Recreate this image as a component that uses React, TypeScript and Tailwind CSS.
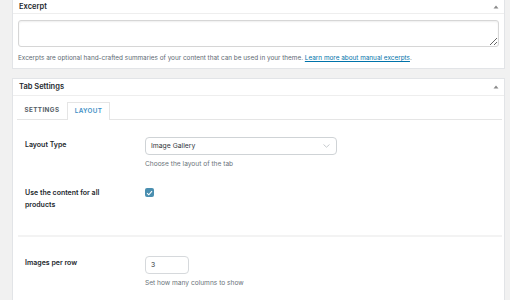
import React from 'react';

const font = { fontFamily: '"Inter", "Liberation Sans", sans-serif' };

const Caret = () => (
  <svg width="6" height="4" viewBox="0 0 6 4" className="text-[#8a8a8a]">
    <path d="M3 0.5 L5.5 3.5 L0.5 3.5 Z" fill="currentColor" />
  </svg>
);

export default function App() {
  return (
    <div
      className="w-[510px] h-[300px] overflow-hidden bg-[#f1f1f1] pl-[12px] pr-[5px] text-[#23282d]"
      style={font}
    >
      {/* Excerpt */}
      <div className="-mt-[2px] border border-[#e2e4e7] bg-white">
        <div className="flex h-[15px] items-center justify-between border-b border-[#eeeeee] pl-[6px] pr-[5px] pt-[1px]">
          <span className="text-[7.5px] font-semibold">Excerpt</span>
          <Caret />
        </div>
        <div className="px-[5px] pt-[6px] pb-[5px]">
          <textarea
            className="block h-[27px] w-full resize-y rounded-[3px] border border-[#d6d6d6] shadow-[inset_0_1px_2px_rgba(0,0,0,0.07)] outline-none"
            readOnly
          />
          <p className="mt-[6px] text-[6.4px] leading-[10px] text-[#606a73]">
            Excerpts are optional hand-crafted summaries of your content that can be used in your theme.{' '}
            <span className="text-[#0073aa] underline">Learn more about manual excerpts</span>.
          </p>
        </div>
      </div>

      {/* Tab Settings */}
      <div className="mt-[9px] border border-[#e2e4e7] bg-white pb-[30px]">
        <div className="flex h-[17px] items-center justify-between border-b border-[#eeeeee] pl-[6px] pr-[5px]">
          <span className="text-[7.5px] font-semibold">Tab Settings</span>
          <Caret />
        </div>
        <div className="pl-[4px] pr-[2px] pt-[6px]">
          <div className="flex h-[18px] items-stretch border-b border-[#e5e5e5]">
            <div className="flex w-[50px] items-center justify-center text-[6.3px] font-bold tracking-[0.4px] text-[#555d66]">
              SETTINGS
            </div>
            <div className="-mb-px flex w-[43px] items-center justify-center border border-b-0 border-[#e5e5e5] bg-white text-[6.3px] font-semibold tracking-[0.3px] text-[#3d8fc6]">
              LAYOUT
            </div>
          </div>

          <div className="pl-[8px] pt-[17px]">
            <div className="grid grid-cols-[120px_1fr]">
              <div className="pt-[3px] text-[7px] font-semibold leading-[10px]">Layout Type</div>
              <div>
                <div className="flex h-[18px] w-[192px] items-center justify-between rounded-[4px] border border-[#cfd3d6] pl-[5px] pr-[6px] text-[6.8px] text-[#32373c]">
                  <span>Image Gallery</span>
                  <svg width="7" height="4" viewBox="0 0 7 4">
                    <path d="M0.5 0.5 L3.5 3.2 L6.5 0.5" fill="none" stroke="#b8bcc0" strokeWidth="0.8" />
                  </svg>
                </div>
                <p className="mt-[4px] text-[6.6px] leading-[10px] text-[#6b737a]">Choose the layout of the tab</p>
              </div>
            </div>

            <div className="mt-[18px] grid grid-cols-[120px_1fr] pb-[24px]">
              <div className="w-[90px] text-[7px] font-semibold leading-[12px]">
                Use the content for all products
              </div>
              <div className="pt-[1px]">
                <div className="flex h-[9px] w-[9px] items-center justify-center rounded-[2px] bg-[#4a8fb0]">
                  <svg width="7" height="6" viewBox="0 0 7 6">
                    <path d="M1 3.2 L2.8 4.8 L6 1.2" fill="none" stroke="white" strokeWidth="1.1" />
                  </svg>
                </div>
              </div>
            </div>
          </div>

          <div className="ml-[1px] h-[2px] bg-[#f3f3f3]" />

          <div className="pl-[8px] pt-[19px]">
            <div className="grid grid-cols-[120px_1fr]">
              <div className="pt-[2px] text-[7px] font-semibold leading-[10px]">Images per row</div>
              <div>
                <div className="flex h-[18px] w-[44px] items-center rounded-[4px] border border-[#d6d9dc] pl-[5px] text-[6.8px] text-[#32373c]">
                  3
                </div>
                <p className="mt-[4px] text-[6.6px] leading-[10px] text-[#6b737a]">Set how many columns to show</p>
              </div>
            </div>
          </div>
        </div>
      </div>
    </div>
  );
}
